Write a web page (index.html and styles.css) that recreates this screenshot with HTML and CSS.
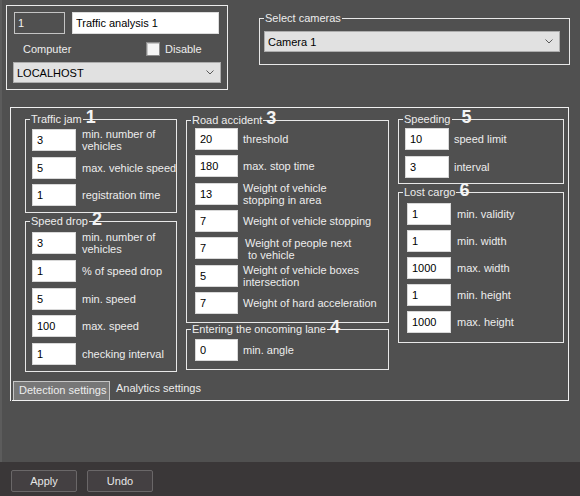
FILE: index.html
```html
<!DOCTYPE html>
<html lang="en">
<head>
    <meta charset="UTF-8">
    <title>Traffic analysis 1</title>
    <link rel="stylesheet" href="styles.css">
</head>
<body>
    <div class="window">
        <div class="main">
            <!-- Header: object id, name, computer, cameras -->
            <div class="top">
                <div class="ident">
                    <div class="ident-row">
                        <input class="id-box" type="text" value="1">
                        <input class="name-box" type="text" value="Traffic analysis 1">
                    </div>
                    <div class="comp-row">
                        <span class="comp-label">Computer</span>
                        <span class="check"></span>
                        <span>Disable</span>
                    </div>
                    <div class="select select-host">
                        <span>LOCALHOST</span>
                        <svg class="chev" width="8" height="5" viewBox="0 0 8 5"><polyline points="0.5,0.5 4,4 7.5,0.5" fill="none" stroke="#5a5a5a" stroke-width="1"/></svg>
                    </div>
                </div>
                <div class="group cams">
                    <div class="legend"><span class="title">Select cameras</span></div>
                    <div class="select select-cam">
                        <span>Camera 1</span>
                        <svg class="chev" width="8" height="5" viewBox="0 0 8 5"><polyline points="0.5,0.5 4,4 7.5,0.5" fill="none" stroke="#5a5a5a" stroke-width="1"/></svg>
                    </div>
                </div>
            </div>

            <!-- Detection settings panel -->
            <div class="panel">
                <div class="cols">
                    <div class="col col-left">
                        <div class="group g-jam">
                            <div class="legend"><span class="title">Traffic jam</span><span class="num">1</span></div>
                            <div class="row"><input class="val" type="text" value="3"><span class="lbl">min. number of<br>vehicles</span></div>
                            <div class="row"><input class="val" type="text" value="5"><span class="lbl">max. vehicle speed</span></div>
                            <div class="row"><input class="val" type="text" value="1"><span class="lbl">registration time</span></div>
                        </div>
                        <div class="group g-drop">
                            <div class="legend"><span class="title">Speed drop</span><span class="num">2</span></div>
                            <div class="row"><input class="val" type="text" value="3"><span class="lbl">min. number of<br>vehicles</span></div>
                            <div class="row"><input class="val" type="text" value="1"><span class="lbl">% of speed drop</span></div>
                            <div class="row"><input class="val" type="text" value="5"><span class="lbl">min. speed</span></div>
                            <div class="row"><input class="val" type="text" value="100"><span class="lbl">max. speed</span></div>
                            <div class="row"><input class="val" type="text" value="1"><span class="lbl">checking interval</span></div>
                        </div>
                    </div>

                    <div class="col col-mid">
                        <div class="group g-accident">
                            <div class="legend"><span class="title">Road accident</span><span class="num">3</span></div>
                            <div class="row"><input class="val" type="text" value="20"><span class="lbl">threshold</span></div>
                            <div class="row"><input class="val" type="text" value="180"><span class="lbl">max. stop time</span></div>
                            <div class="row"><input class="val" type="text" value="13"><span class="lbl">Weight of vehicle<br>stopping in area</span></div>
                            <div class="row"><input class="val" type="text" value="7"><span class="lbl">Weight of vehicle stopping</span></div>
                            <div class="row"><input class="val" type="text" value="7"><span class="lbl lbl-shift">Weight of people next<br>&nbsp;to vehicle</span></div>
                            <div class="row"><input class="val" type="text" value="5"><span class="lbl">Weight of vehicle boxes<br>intersection</span></div>
                            <div class="row"><input class="val" type="text" value="7"><span class="lbl">Weight of hard acceleration</span></div>
                        </div>
                        <div class="group g-lane">
                            <div class="legend"><span class="title">Entering the oncoming lane</span><span class="num">4</span></div>
                            <div class="row"><input class="val" type="text" value="0"><span class="lbl">min. angle</span></div>
                        </div>
                    </div>

                    <div class="col col-right">
                        <div class="group g-speeding">
                            <div class="legend"><span class="title">Speeding</span><span class="num num-far">5</span></div>
                            <div class="row"><input class="val" type="text" value="10"><span class="lbl">speed limit</span></div>
                            <div class="row"><input class="val" type="text" value="3"><span class="lbl">interval</span></div>
                        </div>
                        <div class="group g-cargo">
                            <div class="legend"><span class="title">Lost cargo</span><span class="num">6</span></div>
                            <div class="row"><input class="val" type="text" value="1"><span class="lbl">min. validity</span></div>
                            <div class="row"><input class="val" type="text" value="1"><span class="lbl">min. width</span></div>
                            <div class="row"><input class="val" type="text" value="1000"><span class="lbl">max. width</span></div>
                            <div class="row"><input class="val" type="text" value="1"><span class="lbl">min. height</span></div>
                            <div class="row"><input class="val" type="text" value="1000"><span class="lbl">max. height</span></div>
                        </div>
                    </div>
                </div>

                <div class="tabs">
                    <span class="tab active">Detection settings</span>
                    <span class="tab">Analytics settings</span>
                </div>
            </div>
        </div>

        <div class="footer">
            <button class="btn">Apply</button>
            <button class="btn">Undo</button>
        </div>
    </div>
</body>
</html>
```

FILE: styles.css
```css
* {
    box-sizing: border-box;
}

body {
    margin: 0;
    background: #505050;
    color: #ededed;
    font-family: 'Liberation Sans', Arial, sans-serif;
    font-size: 11px;
}

.window {
    height: 496px;
    display: flex;
    flex-direction: column;
}

.main {
    flex: 1;
    padding-top: 5px;
    box-shadow: inset 2px 0 #5c5c5c;
}

/* header */
.top {
    display: flex;
    align-items: flex-start;
}

.ident {
    width: 222px;
    height: 85px;
    margin-left: 6px;
    border: 1px solid #ececec;
    padding: 6px 0 0 7px;
}

.ident-row {
    display: flex;
    gap: 7px;
}

.id-box,
.name-box {
    height: 22px;
    margin: 0;
    font: inherit;
    font-size: 11px;
}

.id-box {
    width: 51px;
    background: #505050;
    color: #f2f2f2;
    border: 1px solid #c4c4c4;
    padding: 0 0 0 3px;
}

.name-box {
    width: 147px;
    background: #fff;
    color: #000;
    border: 1px solid #dcdcdc;
    padding: 0 0 0 3px;
}

.comp-row {
    display: flex;
    align-items: center;
    height: 15px;
    margin-top: 7px;
    padding-left: 9px;
}

.comp-label {
    width: 123px;
}

.check {
    width: 14px;
    height: 14px;
    margin-right: 5px;
    background: #f6f6f6;
    border: 1px solid #8c8c8c;
    box-shadow: inset 1px 1px #c8c8c8;
}

.select {
    display: flex;
    align-items: center;
    justify-content: space-between;
    height: 21px;
    background: #e1e1e1;
    border: 1px solid #adadad;
    color: #000;
    padding: 0 6px 0 3px;
}

.select-host {
    width: 208px;
    margin: 6px 0 0 -1px;
}

.select-cam {
    width: 296px;
}

.chev {
    display: block;
}

/* group boxes */
.group {
    position: relative;
    border: 1px solid #e8e8e8;
    display: flex;
    flex-direction: column;
}

.legend {
    position: absolute;
    top: -8px;
    left: 4px;
    line-height: 14px;
    white-space: nowrap;
}

.title {
    background: #505050;
    padding: 0 1px;
}

.num {
    margin-left: 3px;
    font-size: 18px;
    font-weight: bold;
    line-height: 0;
    color: #f4f4f4;
}

.num-far {
    margin-left: 10px;
}

.cams {
    width: 311px;
    height: 47px;
    margin: 13px 0 0 31px;
    padding: 12px 0 0 4px;
}

/* main panel */
.panel {
    width: 559px;
    height: 294px;
    margin: 17px 0 0 10px;
    border: 1px solid #f0f0f0;
    border-bottom: none;
    display: flex;
    flex-direction: column;
    padding: 11px 0 0 14px;
}

.cols {
    display: flex;
    gap: 9px;
    align-items: flex-start;
}

.col {
    display: flex;
    flex-direction: column;
}

.col-left {
    width: 152px;
    gap: 8px;
}

.col-mid {
    width: 203px;
    margin-top: 1px;
    gap: 6px;
}

.col-right {
    width: 166px;
    gap: 8px;
}

.row {
    display: flex;
    align-items: center;
    gap: 6px;
    height: 22px;
    flex: none;
}

.val {
    width: 44px;
    height: 22px;
    margin: 0;
    flex: none;
    background: #fff;
    color: #000;
    border: 1px solid #d8d8d8;
    padding: 0 0 0 4px;
    font: inherit;
    font-size: 11px;
}

.lbl {
    line-height: 12px;
    white-space: nowrap;
}

.g-jam {
    padding: 9px 0 6px 6px;
    gap: 5.5px;
}

.g-drop {
    padding: 10px 0 6px 6px;
    gap: 5.75px;
}

.col-mid .row {
    gap: 5px;
}

.col-mid .val {
    width: 43px;
}

.g-accident {
    padding: 7px 0 8px 8px;
    gap: 5.33px;
}

.lbl-shift {
    margin-left: 2px;
    margin-top: 2px;
}

.g-lane {
    padding: 9px 0 8px 8px;
}

.g-speeding {
    padding: 8px 0 5px 6px;
    gap: 6px;
}

.g-speeding .row {
    gap: 5px;
}

.g-cargo {
    padding: 10px 0 9px 8px;
    gap: 5px;
}

/* tabs along the bottom edge */
.tabs {
    margin-top: auto;
    margin-left: -13px;
    margin-right: -1px;
    display: flex;
    align-items: flex-end;
    border-bottom: 1px solid #f0f0f0;
}

.tab {
    height: 19px;
    line-height: 17px;
    padding: 0 5px 0 6px;
}

.tab.active {
    width: 97px;
    background: #777777;
    border: 1px solid #c6c6c6;
    border-bottom: none;
    padding: 0 0 0 5px;
    margin-left: 1px;
}

.tab + .tab {
    line-height: 15px;
}

/* footer */
.footer {
    height: 34px;
    background: #3a3738;
    padding: 8px 0 0 11px;
    display: flex;
    gap: 10px;
    align-items: flex-start;
}

.btn {
    width: 66px;
    height: 22px;
    background: #444042;
    border: 1px solid #6a6768;
    border-radius: 2px;
    color: #e6e6e6;
    font: inherit;
    font-size: 11px;
    padding: 0;
}
```
